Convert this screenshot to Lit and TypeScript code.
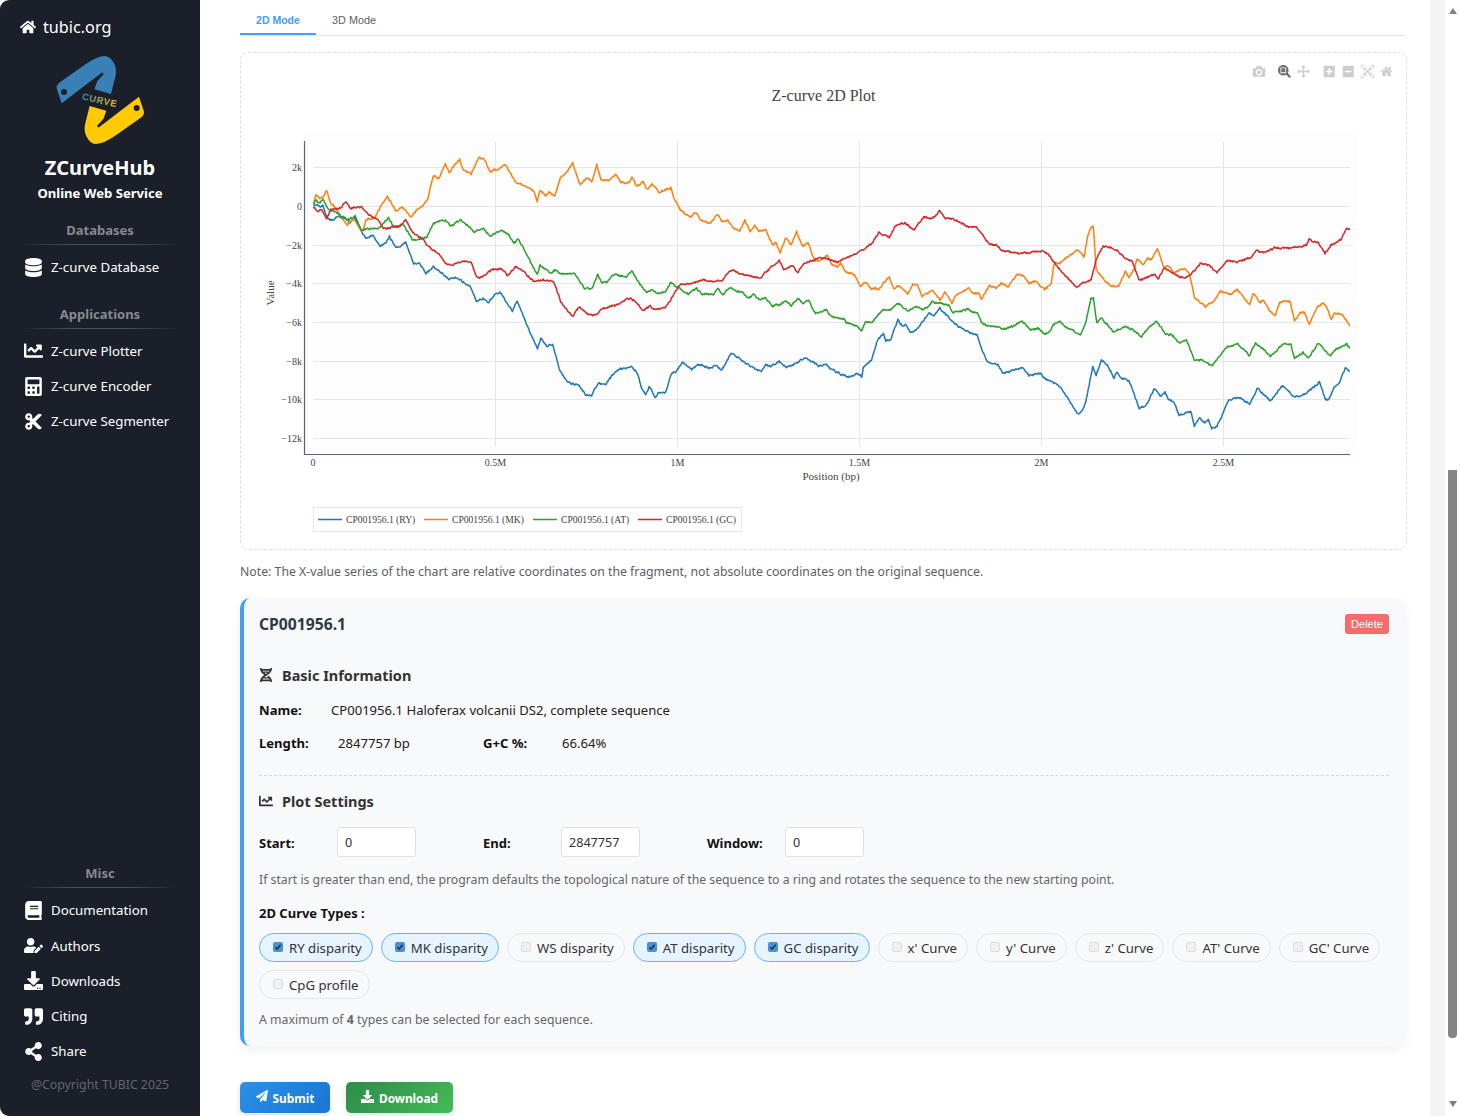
import { LitElement, html, css, svg } from 'lit';
import { customElement } from 'lit/decorators.js';

// fa icon paths, [viewBox width, path]
const ICONS: Record<string, [number, string]> = {
  home: [576, 'M280.37 148.26L96 300.11V464a16 16 0 0 0 16 16l112.06-.29a16 16 0 0 0 15.92-16V368a16 16 0 0 1 16-16h64a16 16 0 0 1 16 16v95.64a16 16 0 0 0 16 16.05L464 480a16 16 0 0 0 16-16V300L295.67 148.26a12.19 12.19 0 0 0-15.3 0zM571.6 251.47L488 182.56V44.05a12 12 0 0 0-12-12h-56a12 12 0 0 0-12 12v72.61L318.47 43a48 48 0 0 0-61 0L4.34 251.47a12 12 0 0 0-1.6 16.9l25.5 31A12 12 0 0 0 45.15 301l235.22-193.74a12.19 12.19 0 0 1 15.3 0L530.9 301a12 12 0 0 0 16.9-1.6l25.5-31a12 12 0 0 0-1.7-16.93z'],
  database: [448, 'M448 73.143v45.714C448 159.143 347.667 192 224 192S0 159.143 0 118.857V73.143C0 32.857 100.333 0 224 0s224 32.857 224 73.143zM448 176v102.857C448 319.143 347.667 352 224 352S0 319.143 0 278.857V176c48.125 33.143 136.208 48.572 224 48.572S399.874 209.143 448 176zm0 160v102.857C448 479.143 347.667 512 224 512S0 479.143 0 438.857V336c48.125 33.143 136.208 48.572 224 48.572S399.874 369.143 448 336z'],
  chart: [512, 'M496 384H64V80c0-8.84-7.16-16-16-16H16C7.16 64 0 71.16 0 80v336c0 17.67 14.33 32 32 32h464c8.84 0 16-7.16 16-16v-32c0-8.84-7.16-16-16-16zM464 96H345.94c-21.38 0-32.09 25.85-16.97 40.97l32.4 32.4L288 242.75l-73.37-73.37c-12.5-12.5-32.76-12.5-45.25 0l-68.69 68.69c-6.25 6.25-6.25 16.38 0 22.63l22.62 22.62c6.25 6.25 16.38 6.25 22.63 0L192 237.25l73.37 73.37c12.5 12.5 32.76 12.5 45.25 0l96-96 32.4 32.4c15.12 15.12 40.97 4.41 40.97-16.97V112c.01-8.84-7.15-16-16-16z'],
  calculator: [448, 'M400 0H48C22.4 0 0 22.4 0 48v416c0 25.6 22.4 48 48 48h352c25.6 0 48-22.4 48-48V48c0-25.6-22.4-48-48-48zM128 435.2c0 6.4-6.4 12.8-12.8 12.8H76.8c-6.4 0-12.8-6.4-12.8-12.8v-38.4c0-6.4 6.4-12.8 12.8-12.8h38.4c6.4 0 12.8 6.4 12.8 12.8v38.4zm0-128c0 6.4-6.4 12.8-12.8 12.8H76.8c-6.4 0-12.8-6.4-12.8-12.8v-38.4c0-6.4 6.4-12.8 12.8-12.8h38.4c6.4 0 12.8 6.4 12.8 12.8v38.4zm128 128c0 6.4-6.4 12.8-12.8 12.8h-38.4c-6.4 0-12.8-6.4-12.8-12.8v-38.4c0-6.4 6.4-12.8 12.8-12.8h38.4c6.4 0 12.8 6.4 12.8 12.8v38.4zm0-128c0 6.4-6.4 12.8-12.8 12.8h-38.4c-6.4 0-12.8-6.4-12.8-12.8v-38.4c0-6.4 6.4-12.8 12.8-12.8h38.4c6.4 0 12.8 6.4 12.8 12.8v38.4zm128 128c0 6.4-6.4 12.8-12.8 12.8h-38.4c-6.4 0-12.8-6.4-12.8-12.8V268.8c0-6.4 6.4-12.8 12.8-12.8h38.4c6.4 0 12.8 6.4 12.8 12.8v166.4zm0-256c0 6.4-6.4 12.8-12.8 12.8H76.8c-6.4 0-12.8-6.4-12.8-12.8V76.8C64 70.4 70.4 64 76.8 64h294.4c6.4 0 12.8 6.4 12.8 12.8v102.4z'],
  cut: [448, 'M278.06 256L444.48 89.57c4.69-4.69 4.69-12.29 0-16.97-32.8-32.8-85.99-32.8-118.79 0L210.18 188.12l-24.86-24.86c4.31-10.92 6.68-22.81 6.68-35.26 0-53.02-42.98-96-96-96S0 74.98 0 128s42.98 96 96 96c4.54 0 8.99-.32 13.36-.93L142.29 256l-32.93 32.93c-4.37-.61-8.83-.93-13.36-.93-53.02 0-96 42.98-96 96s42.98 96 96 96 96-42.98 96-96c0-12.45-2.37-24.34-6.68-35.26l24.86-24.86L325.69 439.4c32.8 32.8 85.99 32.8 118.79 0 4.69-4.68 4.69-12.28 0-16.97L278.06 256zM96 160c-17.64 0-32-14.36-32-32s14.36-32 32-32 32 14.36 32 32-14.36 32-32 32zm0 256c-17.64 0-32-14.36-32-32s14.36-32 32-32 32 14.36 32 32-14.36 32-32 32z'],
  book: [448, 'M448 360V24c0-13.3-10.7-24-24-24H96C43 0 0 43 0 96v320c0 53 43 96 96 96h328c13.3 0 24-10.7 24-24v-16c0-7.5-3.5-14.3-8.9-18.7-4.2-15.4-4.2-59.3 0-74.7 5.4-4.3 8.9-11.1 8.9-18.6zM128 134c0-3.3 2.7-6 6-6h212c3.3 0 6 2.7 6 6v20c0 3.3-2.7 6-6 6H134c-3.3 0-6-2.7-6-6v-20zm0 64c0-3.3 2.7-6 6-6h212c3.3 0 6 2.7 6 6v20c0 3.3-2.7 6-6 6H134c-3.3 0-6-2.7-6-6v-20zm253.4 250H96c-17.7 0-32-14.3-32-32 0-17.6 14.4-32 32-32h285.4c-1.9 17.1-1.9 46.9 0 64z'],
  userEdit: [640, 'M224 256c70.7 0 128-57.3 128-128S294.7 0 224 0 96 57.3 96 128s57.3 128 128 128zm89.6 32h-16.7c-22.2 10.2-46.9 16-72.9 16s-50.6-5.8-72.9-16h-16.7C60.2 288 0 348.2 0 422.4V464c0 26.5 21.5 48 48 48h274.9c-2.4-6.8-3.4-14-2.6-21.3l6.8-60.9 1.2-11.1 7.9-7.9 77.3-77.3c-24.5-27.7-60-45.5-99.9-45.5zm45.3 145.3l-6.8 61c-1.1 10.2 7.5 18.8 17.6 17.6l60.9-6.8 137.9-137.9-71.7-71.7-137.9 137.8zM633 268.9L595.1 231c-9.3-9.3-24.5-9.3-33.8 0l-37.8 37.8-4.1 4.1 71.8 71.7 41.8-41.8c9.3-9.4 9.3-24.5 0-33.9z'],
  download: [512, 'M216 0h80c13.3 0 24 10.7 24 24v168h87.7c17.8 0 26.7 21.5 14.1 34.1L269.7 378.3c-7.5 7.5-19.8 7.5-27.3 0L90.1 226.1c-12.6-12.6-3.7-34.1 14.1-34.1H192V24c0-13.3 10.7-24 24-24zm296 376v112c0 13.3-10.7 24-24 24H24c-13.3 0-24-10.7-24-24V376c0-13.3 10.7-24 24-24h146.7l49 49c20.1 20.1 52.5 20.1 72.6 0l49-49H488c13.3 0 24 10.7 24 24zm-124 88c0-11-9-20-20-20s-20 9-20 20 9 20 20 20 20-9 20-20zm64 0c0-11-9-20-20-20s-20 9-20 20 9 20 20 20 20-9 20-20z'],
  quote: [512, 'M464 32H336c-26.5 0-48 21.5-48 48v128c0 26.5 21.5 48 48 48h80v64c0 35.3-28.7 64-64 64h-8c-13.3 0-24 10.7-24 24v48c0 13.3 10.7 24 24 24h8c88.4 0 160-71.6 160-160V80c0-26.5-21.5-48-48-48zm-288 0H48C21.5 32 0 53.5 0 80v128c0 26.5 21.5 48 48 48h80v64c0 35.3-28.7 64-64 64h-8c-13.3 0-24 10.7-24 24v48c0 13.3 10.7 24 24 24h8c88.4 0 160-71.6 160-160V80c0-26.5-21.5-48-48-48z'],
  share: [448, 'M352 320c-22.608 0-43.387 7.819-59.79 20.895l-102.486-64.054a96.551 96.551 0 0 0 0-41.683l102.486-64.054C308.613 184.181 329.392 192 352 192c53.019 0 96-42.981 96-96S405.019 0 352 0s-96 42.981-96 96c0 7.158.79 14.13 2.276 20.841L155.79 180.895C139.387 167.819 118.608 160 96 160c-53.019 0-96 42.981-96 96s42.981 96 96 96c22.608 0 43.387-7.819 59.79-20.895l102.486 64.054A96.301 96.301 0 0 0 256 416c0 53.019 42.981 96 96 96s96-42.981 96-96-42.981-96-96-96z'],
  dna: [448, 'M.1 494.1c-1.1 9.5 6.3 17.8 15.9 17.8l32.3.1c8.1 0 14.9-5.9 16-13.9.7-4.9 1.8-11.1 3.4-18.1H380c1.6 6.9 2.9 13.2 3.5 18.1 1.1 8 7.9 14 16 13.9l32.3-.1c9.6 0 17.1-8.3 15.9-17.8-4.6-37.9-25.6-129-118.9-207.7-17.6 12.4-37.1 24.2-58.5 35.4 6.2 4.6 11.4 9.4 17 14.2H159.7c21.3-18.1 47-35.6 78.7-51.4C410.5 199.1 442.1 65.8 447.9 17.9 449 8.4 441.6.1 432 .1L399.6 0c-8.1 0-14.9 5.9-16 13.9-.7 4.9-1.8 11.1-3.4 18.1H67.8c-1.6-7-2.7-13.1-3.4-18.1-1.1-8-7.9-14-16-13.9L16.1.1C6.5.1-1 8.4.1 17.9 5.3 60.8 31.4 171.8 160 256 31.5 340.2 5.3 451.2.1 494.1zM224 219.6c-25.1-13.7-46.4-28.4-64.3-43.6h128.5c-17.8 15.2-39.1 30-64.2 43.6zM355.1 96c-5.8 10.4-12.8 21.1-21 32H114c-8.3-10.9-15.3-21.6-21-32h262.1zM92.9 416c5.8-10.4 12.8-21.1 21-32h219.4c8.3 10.9 15.4 21.6 21.2 32H92.9z'],
  plane: [512, 'M476 3.2L12.5 270.6c-18.1 10.4-15.8 35.6 2.2 43.2L121 358.4l287.3-253.2c5.5-4.9 13.3 2.6 8.6 8.3L176 407v80.5c0 23.6 28.5 32.9 42.5 15.8L282 426l124.6 52.2c14.2 6 30.4-2.9 33-18.2l72-432C515 7.8 493.3-6.8 476 3.2z'],
};

const icon = (name: string, size: number) => {
  const [w, d] = ICONS[name];
  return html`<svg class="ico" width=${size} height=${size} viewBox="0 0 ${w} 512"><path fill="currentColor" d=${d}></path></svg>`;
};

// modebar glyphs of the plot: [x, viewBox width, active, path]
const MODEBAR: [number, number, boolean, string][] = [
  [1252.5, 1000, false, 'm500 450c-83 0-150-67-150-150 0-83 67-150 150-150 83 0 150 67 150 150 0 83-67 150-150 150z m400 150h-120c-16 0-34 13-39 29l-31 93c-6 15-23 28-40 28h-340c-16 0-34-13-39-28l-31-94c-6-15-23-28-40-28h-120c-55 0-100-45-100-100v-450c0-55 45-100 100-100h800c55 0 100 45 100 100v450c0 55-45 100-100 100z m-400-550c-138 0-250 112-250 250 0 138 112 250 250 250 138 0 250-112 250-250 0-138-112-250-250-250z m365 380c-19 0-35 16-35 35 0 19 16 35 35 35 19 0 35-16 35-35 0-19-16-35-35-35z'],
  [1278, 1000, true, 'm1000-25l-250 251c40 63 63 138 63 218 0 224-182 406-407 406-224 0-406-182-406-406s183-406 407-406c80 0 155 22 218 62l250-250 125 125z m-812 250l0 438 437 0 0-438-437 0z m62 375l313 0 0-312-313 0 0 312z'],
  [1297, 1000, false, 'm1000 350l-187 188 0-125-250 0 0 250 125 0-188 187-187-187 125 0 0-250-250 0 0 125-188-188 186-187 0 125 252 0 0-250-125 0 187-188 188 188-125 0 0 250 250 0 0-126 187 188z'],
  [1323.5, 875, false, 'm1 787l0-875 875 0 0 875-875 0z m687-500l-187 0 0-187-125 0 0 187-188 0 0 125 188 0 0 187 125 0 0-187 187 0 0-125z'],
  [1342.5, 875, false, 'm0 788l0-876 875 0 0 876-875 0z m688-500l-500 0 0 125 500 0 0-125z'],
  [1361, 1000, false, 'm250 850l-187 0-63 0 0-62 0-188 63 0 0 188 187 0 0 62z m688 0l-188 0 0-62 188 0 0-188 62 0 0 188 0 62-62 0z m-875-938l0 188-63 0 0-188 0-62 63 0 187 0 0 62-187 0z m875 188l0-188-188 0 0-62 188 0 62 0 0 62 0 188-62 0z m-125 188l-1 0-93-94-156 156 156 156 92-93 2 0 0 250-250 0 0-2 93-92-156-156-156 156 94 92 0 2-250 0 0-250 0 0 93 93 157-156-157-156-93 94 0 0 0-250 250 0 0 0-94 93 156 157 156-157-93-93 0 0 250 0 0 250z'],
  [1380.5, 928.6, false, 'm786 296v-267q0-15-11-26t-25-10h-214v214h-143v-214h-214q-15 0-25 10t-11 26v267q0 1 0 2t0 2l321 264 321-264q1-1 1-4z m124 39l-34-41q-5-5-12-6h-2q-7 0-12 3l-386 322-386-322q-7-4-13-4-7 2-12 7l-35 41q-4 5-3 13t6 12l401 334q18 15 42 15t43-15l136-114v109q0 8 5 13t13 5h107q8 0 13-5t5-13v-227l122-102q5-5 6-12t-4-13z'],
];

// curve key points traced off the plot, left half then right half
type Series = { color: string; seed: number; a: number[]; b: number[] };
const SERIES: Series[] = [
  {
    color: '#1f77b4', seed: 11,
    a: [97,228,105,225,118,232,125,228,135,258,147,270,165,262,185,258,205,280,218,258,238,308,250,325,270,315,290,348,305,340,318,318,335,352,352,350,365,335,388,400,405,400,425,432,445,410,465,425,490,448,515,442,530,455,552,470,570,512,590,505,605,518,625,492,642,488,660,520,675,542,688,512,705,555,725,605,748,657,758,625,775,650,792,645,812,720,835,755,870,765,888,795,905,797,925,760,945,765,965,735,985,720,1020,710,1040,735,1050,775,1062,795,1072,772,1090,803,1100,785,1120,788,1135,735,1150,725,1168,697,1195,718,1215,703,1250,715,1268,705,1282,722,1310,668,1340,690,1365,710,1398,725,1410,705,1425,712,1448,695,1470,710,1490,705,1525,685,1550,697,1565,708],
    b: [0,705,18,703,30,718,60,732,85,740,110,730,120,740,125,710,150,688,165,635,183,612,190,632,205,625,225,570,240,590,248,580,262,610,280,598,315,548,330,558,347,535,375,565,400,590,430,605,455,618,470,665,485,695,515,705,530,730,585,712,605,735,640,730,650,745,690,765,715,800,745,852,755,850,770,815,790,710,800,735,815,690,835,710,852,745,860,725,872,745,895,750,925,835,945,825,968,775,985,797,1000,790,1010,812,1025,815,1040,855,1075,845,1085,888,1100,860,1115,880,1125,870,1135,898,1150,890,1165,855,1185,808,1215,803,1245,822,1268,775,1305,815,1340,768,1375,802,1410,790,1447,755,1465,808,1475,808,1490,772,1505,760,1522,715,1538,725],
  },
  {
    color: '#ff7f0e', seed: 23,
    a: [97,225,105,195,115,205,125,205,135,180,145,215,165,240,180,265,195,285,215,265,238,305,250,270,275,260,295,225,312,200,335,240,355,232,380,262,400,235,415,225,428,210,445,140,462,145,480,100,492,128,510,98,522,88,532,118,555,133,578,80,595,90,610,125,630,118,655,105,685,155,715,170,738,185,747,215,755,183,772,198,780,185,798,198,815,140,835,125,850,98,872,165,892,142,905,155,920,105,932,150,955,152,975,135,990,158,1015,160,1022,142,1035,168,1055,155,1065,178,1080,162,1100,185,1135,175,1145,208,1162,240,1190,262,1208,248,1225,272,1250,278,1270,253,1285,275,1300,270,1315,295,1335,300,1350,270,1365,305,1378,283,1390,305,1410,298,1430,343,1440,340,1452,368,1468,322,1485,345,1500,303,1518,350,1533,335,1552,390,1568,392],
    b: [0,392,20,375,35,405,50,410,60,400,75,425,100,435,118,470,130,452,150,475,170,475,200,440,212,475,228,465,255,490,268,465,282,465,295,500,325,480,348,510,362,485,382,515,395,490,430,475,442,490,462,490,467,510,490,465,510,475,525,460,545,470,570,435,588,435,605,462,625,455,650,480,670,460,678,400,695,398,720,378,745,360,765,380,775,320,785,290,792,290,800,420,825,450,845,470,865,470,885,425,895,445,910,420,918,385,935,405,950,385,960,385,978,358,995,410,1015,410,1025,430,1055,415,1070,430,1085,500,1115,530,1140,515,1160,482,1190,490,1210,478,1245,525,1255,490,1275,518,1285,510,1305,545,1320,555,1332,515,1362,515,1375,570,1395,545,1405,548,1418,585,1440,535,1455,522,1465,525,1482,568,1490,550,1515,555,1538,590],
  },
  {
    color: '#2ca02c', seed: 37,
    a: [97,222,103,210,115,220,125,208,140,238,165,248,195,270,215,260,238,305,255,295,290,295,315,263,330,290,360,285,385,330,425,322,445,280,480,268,495,290,525,270,565,305,590,295,612,318,640,300,665,315,680,340,692,325,720,380,747,435,755,408,785,430,800,420,815,435,855,430,885,475,905,475,922,435,935,455,948,455,970,430,1005,440,1022,425,1045,465,1065,488,1080,475,1095,488,1120,485,1135,458,1150,470,1185,490,1210,475,1225,490,1260,495,1272,478,1285,495,1305,475,1345,490,1360,505,1375,495,1390,510,1410,505,1430,530,1470,515,1485,528,1505,505,1520,520,1535,512,1555,550,1568,545],
    b: [0,548,18,540,30,562,52,562,70,570,75,580,110,590,120,605,130,580,150,578,180,540,205,538,225,518,255,545,280,530,300,540,325,517,372,522,385,548,430,540,458,552,468,580,490,585,510,590,540,598,585,575,610,600,630,595,650,610,665,605,675,582,695,575,710,590,755,615,770,575,785,505,792,505,802,580,815,562,850,605,885,590,905,598,932,618,950,595,975,575,1000,610,1020,615,1040,640,1062,632,1085,692,1105,690,1135,708,1180,650,1210,645,1245,675,1262,640,1290,660,1305,678,1345,640,1365,645,1375,685,1400,665,1415,685,1445,640,1478,680,1495,660,1525,640,1538,660],
  },
  {
    color: '#d62728', seed: 51,
    a: [97,232,110,245,122,240,135,265,150,240,175,235,192,215,205,237,235,230,260,255,285,270,300,295,345,290,365,272,385,305,415,325,440,360,465,375,480,400,500,405,520,395,555,395,570,438,585,440,615,420,640,415,660,435,685,410,710,425,735,455,770,450,795,455,815,515,850,558,870,528,890,552,920,555,935,535,975,525,1010,505,1030,510,1052,542,1075,530,1090,540,1120,532,1140,500,1160,465,1195,462,1225,450,1280,455,1310,420,1345,435,1395,445,1410,425,1450,390,1462,418,1490,408,1503,430,1520,402,1550,392,1568,385],
    b: [0,385,25,385,50,398,75,385,115,365,150,342,170,308,200,322,220,285,245,280,272,298,300,262,325,265,347,242,362,265,385,265,425,290,455,292,490,345,510,345,525,362,570,370,620,365,655,365,685,405,710,435,745,473,760,458,785,450,800,390,820,348,860,360,885,385,905,395,925,450,970,432,980,445,998,415,1025,430,1040,442,1070,440,1102,400,1125,405,1150,428,1180,390,1210,395,1250,380,1265,360,1285,370,1320,355,1365,355,1410,345,1418,328,1445,340,1463,372,1480,345,1510,328,1525,300,1538,298],
  },
];

function tracePath(s: Series): string {
  const pts: [number, number][] = [];
  for (let i = 0; i < s.a.length; i += 2) pts.push([280 + s.a[i] / 2.904, 130 + s.a[i + 1] / 3]);
  for (let i = 2; i < s.b.length; i += 2) pts.push([820.3 + s.b[i] / 2.9, 130 + s.b[i + 1] / 3]);
  // seeded jitter, fast plus slow, so the line reads like real sequence data
  let r = s.seed;
  const rnd = () => {
    r = (r * 16807) % 2147483647;
    return r / 2147483647 - 0.5;
  };
  let fast = 0;
  let slow = 0;
  let d = '';
  for (let i = 0; i < pts.length - 1; i++) {
    const [x0, y0] = pts[i];
    const [x1, y1] = pts[i + 1];
    const steps = Math.max(1, Math.round((x1 - x0) * 1.6));
    for (let k = 0; k < steps; k++) {
      const t = k / steps;
      fast = fast * 0.3 + rnd() * 1.5;
      slow = slow * 0.86 + rnd() * 0.7;
      d += `${d ? 'L' : 'M'}${(x0 + (x1 - x0) * t).toFixed(1)} ${(y0 + (y1 - y0) * t + fast + slow).toFixed(1)}`;
    }
  }
  return d;
}

const Y_TICKS: [number, string][] = [[167.5, '2k'], [206.5, '0'], [245.5, '−2k'], [283.5, '−4k'], [322.5, '−6k'], [361.5, '−8k'], [399.5, '−10k'], [438.5, '−12k']];
const X_TICKS: [number, string][] = [[313, '0'], [495.5, '0.5M'], [677.5, '1M'], [859.5, '1.5M'], [1041.5, '2M'], [1223.5, '2.5M']];
const LEGEND: [number, string, string][] = [
  [318, '#1f77b4', 'CP001956.1 (RY)'],
  [424, '#ff7f0e', 'CP001956.1 (MK)'],
  [533, '#2ca02c', 'CP001956.1 (AT)'],
  [638, '#d62728', 'CP001956.1 (GC)'],
];

const CHIPS: [string, boolean][] = [
  ['RY disparity', true], ['MK disparity', true], ['WS disparity', false], ['AT disparity', true], ['GC disparity', true],
  ["x' Curve", false], ["y' Curve", false], ["z' Curve", false], ["AT' Curve", false], ["GC' Curve", false], ['CpG profile', false],
];

@customElement('z-chart')
export class ZChart extends LitElement {
  static styles = css`
    :host { display: block; }
    svg { display: block; }
    text { font-family: "Liberation Serif", serif; fill: #444; font-size: 10px; }
    .title { font-size: 16px; }
    .axis-title { font-size: 11px; }
    .leg { font-size: 9.6px; }
  `;

  private paths = SERIES.map((s) => ({ color: s.color, d: tracePath(s) }));

  render() {
    return html`
      <svg width="1165" height="496" viewBox="241 53 1165 496">
        <defs><clipPath id="plot"><rect x="304" y="133" width="1046" height="321"></rect></clipPath></defs>
        <rect x="304" y="133" width="1053" height="321" fill="#fdfdfd"></rect>
        ${Y_TICKS.map(([y, t]) => svg`
          <line x1="313" x2="1350" y1=${y} y2=${y} stroke="#e6e6e6"></line>
          <text x="302" y=${y + 3} text-anchor="end">${t}</text>`)}
        ${X_TICKS.slice(1).map(([x]) => svg`<line x1=${x} x2=${x} y1="141" y2="446" stroke="#e6e6e6"></line>`)}
        ${X_TICKS.map(([x, t]) => svg`<text x=${x} y="466" text-anchor="middle">${t}</text>`)}
        <g clip-path="url(#plot)" fill="none" stroke-width="1.5" stroke-linejoin="round">
          ${this.paths.map((p) => svg`<path d=${p.d} stroke=${p.color}></path>`)}
        </g>
        <path d="M304.5 141V454.5H1350" fill="none" stroke="#506784" stroke-width="1.2"></path>
        <text class="title" x="823.5" y="101" text-anchor="middle">Z-curve 2D Plot</text>
        <text class="axis-title" x="831" y="480" text-anchor="middle">Position (bp)</text>
        <text class="axis-title" transform="translate(274 293) rotate(-90)" text-anchor="middle">Value</text>
        <rect x="313.5" y="507.5" width="428" height="24" fill="#fff" stroke="#e8e8e8"></rect>
        ${LEGEND.map(([x, c, t]) => svg`
          <line x1=${x} x2=${x + 24} y1="519.5" y2="519.5" stroke=${c} stroke-width="1.5"></line>
          <text class="leg" x=${x + 28} y="523">${t}</text>`)}
        ${MODEBAR.map(([x, w, on, d]) => svg`
          <svg x=${x} y="65" width=${(13 * w) / 1000} height="13" viewBox="0 0 ${w} 1000">
            <path transform="matrix(1 0 0 -1 0 850)" fill=${on ? '#6f6f6f' : '#cdcdcd'} d=${d}></path>
          </svg>`)}
      </svg>
    `;
  }
}

@customElement('app-root')
export class AppRoot extends LitElement {
  static styles = css`
    :host {
      display: block;
      height: 1116px;
      overflow: hidden;
      font-family: "Noto Sans", "Open Sans", sans-serif;
      background: #fff;
    }
    .ico { display: block; flex: none; }
    .page { display: flex; height: 1116px; }

    /* sidebar */
    .side {
      width: 200px;
      flex: none;
      box-sizing: border-box;
      background: #1b1f29;
      border-radius: 9px 0 0 9px;
      color: #fff;
      display: flex;
      flex-direction: column;
    }
    .brand-link {
      display: flex;
      align-items: center;
      gap: 7px;
      padding: 16px 0 0 20px;
      font-size: 16.2px;
      line-height: 22px;
    }
    .logo { display: block; margin: 7px auto 0; }
    .logo-text { font-family: "Liberation Sans", sans-serif; font-weight: 700; font-size: 28px; letter-spacing: 2px; }
    .hub { text-align: center; font-size: 20px; font-weight: 700; line-height: 26px; }
    .sub { text-align: center; font-size: 13.1px; font-weight: 700; line-height: 18px; margin-top: 3px; }
    .group { text-align: center; font-size: 13px; font-weight: 700; line-height: 18px; color: #868a8f; }
    .group.first { margin-top: 19px; }
    .group.second { margin-top: 20px; }
    .group.last { margin-top: auto; }
    .rule {
      height: 1px;
      margin: 5px 20px 0;
      background: linear-gradient(90deg, transparent, #4a4d54 30%, #4a4d54 70%, transparent);
    }
    .menu { margin-top: 4.5px; }
    .item {
      display: flex;
      align-items: center;
      gap: 8px;
      height: 35.25px;
      padding-left: 24px;
      font-size: 13.25px;
    }
    .copy { text-align: center; font-size: 12.3px; line-height: 18px; color: #63666c; margin: 7px 0 22px; }

    /* main column */
    .main { flex: 1; min-width: 0; box-sizing: border-box; padding: 0 25px 0 40px; }
    .tabs { display: flex; height: 36px; box-sizing: border-box; border-bottom: 1px solid #e4e7ed; }
    .tab {
      width: 76px;
      height: 35px;
      box-sizing: border-box;
      text-align: center;
      font: 10.8px/40px "Liberation Sans", Arial, sans-serif;
      color: #5a5e66;
    }
    .tab.on { color: #409eff; border-bottom: 2px solid #409eff; font-weight: 700; font-size: 10.5px; }
    .plot {
      margin: 16px -2px 0 0;
      height: 498px;
      box-sizing: border-box;
      border: 1px dashed #dcdfe3;
      border-radius: 8px;
    }
    .note { margin-top: 12px; font-size: 12.27px; line-height: 20px; color: #5c6066; }

    /* sequence card */
    .card {
      margin-top: 16px;
      box-sizing: border-box;
      height: 448px;
      background: #f8f9fb;
      border-left: 4px solid #409eff;
      border-radius: 10px;
      padding: 15px 16px 16px 15px;
      box-shadow: 0 4px 12px rgba(0, 0, 0, 0.06);
      color: #333;
    }
    .card-head { display: flex; justify-content: space-between; align-items: center; height: 22px; }
    .seq { font-size: 15.7px; font-weight: 700; color: #2f3a45; }
    .del {
      width: 44px;
      height: 20px;
      border-radius: 3px;
      background: #f56c6c;
      color: #fff;
      text-align: center;
      font: 11px/20px "Liberation Sans", Arial, sans-serif;
    }
    .section {
      display: flex;
      align-items: center;
      gap: 9px;
      height: 22px;
      font-size: 14.5px;
      font-weight: 700;
      color: #333;
    }
    .section.basic { margin-top: 29px; }
    .section.plot-head { margin-top: 14px; }
    .row { display: flex; line-height: 20px; font-size: 13.08px; margin-top: 13px; color: #222; }
    .row.first { margin-top: 14px; }
    .row b, .lbl { font-weight: 700; color: #111; }
    .cell { width: 224px; display: flex; }
    .k1 { width: 72px; }
    .k2 { width: 79px; }
    .divider { margin-top: 22px; border-top: 1px dashed #d8d8d8; }
    .inputs { display: flex; margin-top: 15px; font-size: 13px; }
    .field { width: 224px; display: flex; align-items: center; }
    .lbl { width: 78px; padding-top: 2px; }
    input {
      box-sizing: border-box;
      width: 79px;
      height: 30px;
      padding: 0 7px;
      border: 1px solid #dfe1e5;
      border-radius: 3px;
      background: #fff;
      color: #333;
      font: 12.6px "Noto Sans", sans-serif;
    }
    .help { margin-top: 13px; font-size: 12.25px; line-height: 20px; color: #666; }
    .types { margin-top: 13px; font-size: 13px; line-height: 20px; font-weight: 700; color: #111; }
    .chips { display: flex; flex-wrap: wrap; gap: 8px; margin-top: 10px; }
    .chip {
      display: flex;
      align-items: center;
      gap: 6px;
      height: 29px;
      box-sizing: border-box;
      padding: 0 10px 0 13px;
      border: 1px solid #e3e5e8;
      border-radius: 15px;
      font-size: 13.2px;
      color: #333;
    }
    .chip.on { border-color: #66b1ff; background: #e6f4ff; }
    .box {
      width: 10px;
      height: 10px;
      margin-top: -2px;
      box-sizing: border-box;
      border: 1px solid #dcdcdc;
      border-radius: 2px;
      background: #f0f0f0;
      flex: none;
    }
    .chip.on .box { border: 0; background: #4a90d9; display: flex; }
    .limit { margin-top: 11px; font-size: 12.3px; line-height: 20px; color: #666; }
    .actions { display: flex; gap: 16px; margin-top: 36px; }
    .btn {
      display: flex;
      align-items: center;
      justify-content: center;
      gap: 5px;
      height: 31px;
      border-radius: 5px;
      color: #fff;
      font-size: 11.8px;
      font-weight: 700;
      box-shadow: 0 2px 6px rgba(0, 0, 0, 0.12);
    }
    .btn .ico { margin-top: -3px; }
    .btn.send { width: 90px; background: linear-gradient(135deg, #2b90e8, #1976d2); }
    .btn.get { width: 107px; background: linear-gradient(135deg, #2e8b47, #43bb57); }

    /* right edge */
    .gutter { width: 15px; flex: none; background: #f3f3f3; }
    .bar {
      width: 15px;
      flex: none;
      box-sizing: border-box;
      padding: 8px 3px 0;
      display: flex;
      flex-direction: column;
      align-items: center;
    }
    .up { width: 0; height: 0; border: 4.5px solid transparent; border-top: 0; border-bottom: 6px solid #808080; }
    .thumb { width: 9px; height: 568px; margin-top: 456px; background: #858585; border-radius: 0 0 4px 4px; }
    .down { width: 0; height: 0; margin-top: 63px; border: 4.5px solid transparent; border-bottom: 0; border-top: 6px solid #808080; }
  `;

  private menuItem(ic: string, label: string) {
    return html`<div class="item">${icon(ic, 19)}<span>${label}</span></div>`;
  }

  private logo() {
    const arm = 'M65 175L50 130Q48 122 60 112L130 62Q170 33 195 33Q212 35 222 55Q232 72 226 95L213 147L163 133L172 108L191 88L187 82Z';
    return html`
      <svg class="logo" width="120" height="110" viewBox="0 0 360 330">
        <defs>
          <linearGradient id="lg" x1="0" x2="1" y1="0" y2="0">
            <stop offset="0" stop-color="#3a82b8"></stop>
            <stop offset="1" stop-color="#ffcc00"></stop>
          </linearGradient>
        </defs>
        <path d=${arm} fill="#3880b6"></path>
        <circle cx="72" cy="141" r="9" fill="#1b1f29"></circle>
        <g transform="rotate(180 181 165)">
          <path d=${arm} fill="#ffcb00"></path>
          <circle cx="72" cy="141" r="9" fill="#1b1f29"></circle>
        </g>
        <text class="logo-text" fill="url(#lg)" text-anchor="middle" transform="translate(177 175) rotate(13)">CURVE</text>
      </svg>
    `;
  }

  render() {
    return html`
      <div class="page">
        <aside class="side">
          <div class="brand-link">${icon('home', 16)}<span>tubic.org</span></div>
          ${this.logo()}
          <div class="hub">ZCurveHub</div>
          <div class="sub">Online Web Service</div>
          <div class="group first">Databases</div>
          <div class="rule"></div>
          <div class="menu">${this.menuItem('database', 'Z-curve Database')}</div>
          <div class="group second">Applications</div>
          <div class="rule"></div>
          <div class="menu">
            ${this.menuItem('chart', 'Z-curve Plotter')}
            ${this.menuItem('calculator', 'Z-curve Encoder')}
            ${this.menuItem('cut', 'Z-curve Segmenter')}
          </div>
          <div class="group last">Misc</div>
          <div class="rule"></div>
          <div class="menu">
            ${this.menuItem('book', 'Documentation')}
            ${this.menuItem('userEdit', 'Authors')}
            ${this.menuItem('download', 'Downloads')}
            ${this.menuItem('quote', 'Citing')}
            ${this.menuItem('share', 'Share')}
          </div>
          <div class="copy">@Copyright TUBIC 2025</div>
        </aside>

        <main class="main">
          <div class="tabs">
            <div class="tab on">2D Mode</div>
            <div class="tab">3D Mode</div>
          </div>
          <div class="plot"><z-chart></z-chart></div>
          <div class="note">Note: The X-value series of the chart are relative coordinates on the fragment, not absolute coordinates on the original sequence.</div>

          <section class="card">
            <div class="card-head">
              <div class="seq">CP001956.1</div>
              <div class="del">Delete</div>
            </div>
            <div class="section basic">${icon('dna', 14)}<span>Basic Information</span></div>
            <div class="row first"><b class="k1">Name:</b><span>CP001956.1 Haloferax volcanii DS2, complete sequence</span></div>
            <div class="row">
              <div class="cell"><b class="k2">Length:</b><span>2847757 bp</span></div>
              <div class="cell"><b class="k2">G+C %:</b><span>66.64%</span></div>
            </div>
            <div class="divider"></div>
            <div class="section plot-head">${icon('chart', 14)}<span>Plot Settings</span></div>
            <div class="inputs">
              <div class="field"><span class="lbl">Start:</span><input value="0" /></div>
              <div class="field"><span class="lbl">End:</span><input value="2847757" /></div>
              <div class="field"><span class="lbl">Window:</span><input value="0" /></div>
            </div>
            <div class="help">If start is greater than end, the program defaults the topological nature of the sequence to a ring and rotates the sequence to the new starting point.</div>
            <div class="types">2D Curve Types :</div>
            <div class="chips">
              ${CHIPS.map(([label, on]) => html`
                <div class="chip ${on ? 'on' : ''}">
                  <span class="box">${on
                    ? html`<svg width="10" height="10" viewBox="0 0 10 10"><path d="M2.4 5.2L4.2 7L7.6 2.8" fill="none" stroke="#1d2b3a" stroke-width="1.4"></path></svg>`
                    : ''}</span>
                  <span>${label}</span>
                </div>`)}
            </div>
            <div class="limit">A maximum of <b>4</b> types can be selected for each sequence.</div>
          </section>

          <div class="actions">
            <div class="btn send">${icon('plane', 12)}<span>Submit</span></div>
            <div class="btn get">${icon('download', 13)}<span>Download</span></div>
          </div>
        </main>

        <div class="gutter"></div>
        <div class="bar">
          <div class="up"></div>
          <div class="thumb"></div>
          <div class="down"></div>
        </div>
      </div>
    `;
  }
}
